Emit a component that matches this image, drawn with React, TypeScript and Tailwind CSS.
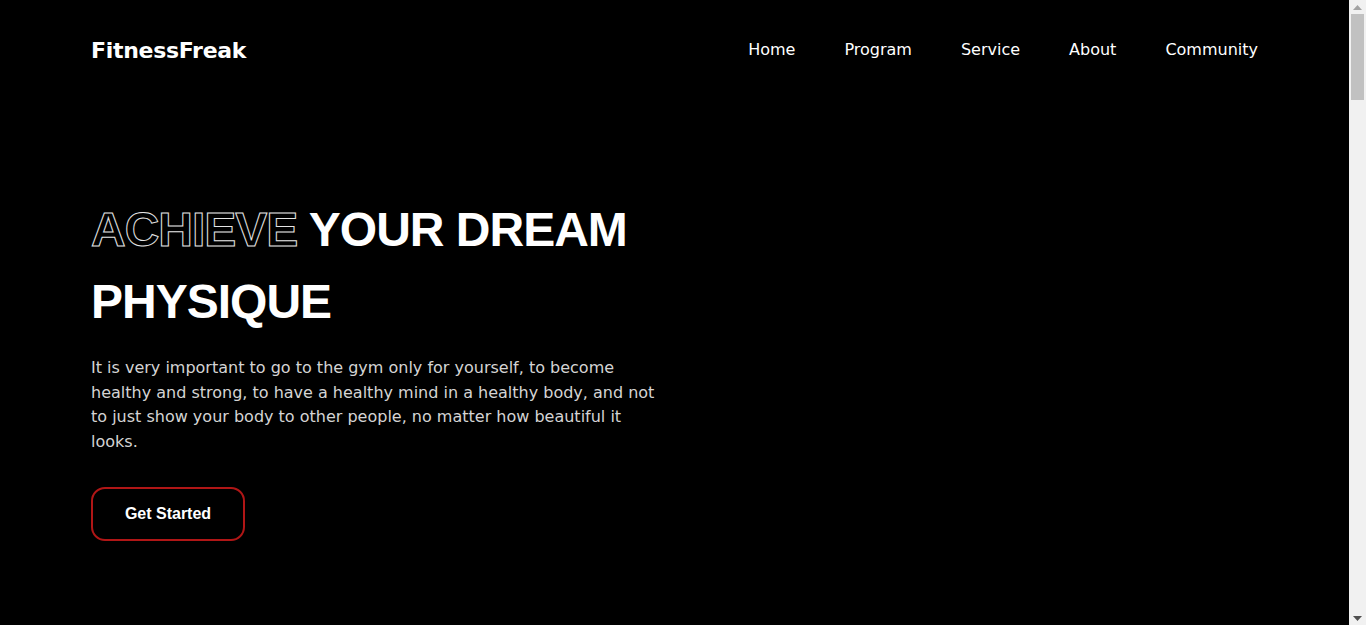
export default function App() {
  const links = ['Home', 'Program', 'Service', 'About', 'Community'];
  return (
    <div className="h-screen flex bg-black text-white font-['DejaVu_Sans',sans-serif] overflow-hidden">
      <main className="flex-1">
        {/* Header */}
        <header className="h-[100px] px-[91px] flex items-center justify-between">
          <div className="text-[22px] font-bold tracking-[-0.3px]">FitnessFreak</div>
          <nav className="flex items-center gap-[49px] text-[16px]">
            {links.map((l) => (
              <a key={l} href="#" className="text-white">
                {l}
              </a>
            ))}
          </nav>
        </header>

        {/* Hero */}
        <section className="px-[91px] pt-[94px]">
          <h1 className="font-['Liberation_Sans',Arial,sans-serif] text-[48px] leading-[72px] font-bold uppercase tracking-[-1px]">
            <span className="text-transparent [-webkit-text-stroke:1px_#e5e5e5]">Achieve</span> Your Dream
            <br />
            Physique
          </h1>
          <p className="mt-[18px] max-w-[570px] text-[16px] leading-[24.5px] text-[#d4d4d4]">
            It is very important to go to the gym only for yourself, to become healthy and strong, to have a healthy
            mind in a healthy body, and not to just show your body to other people, no matter how beautiful it looks.
          </p>
          <button className="mt-[33px] w-[154px] h-[54px] rounded-[14px] border-2 border-[#b01616] font-['Liberation_Sans',Arial,sans-serif] font-bold text-[16px] text-white">
            Get Started
          </button>
        </section>
      </main>

      {/* Scrollbar */}
      <aside className="w-[17px] bg-[#f1f1f1] flex flex-col items-center">
        <div className="h-[14px] flex items-center justify-center">
          <svg width="9" height="5" viewBox="0 0 9 5"><path d="M4.5 0L9 5H0z" fill="#a3a3a3" /></svg>
        </div>
        <div className="w-[13px] h-[86px] bg-[#c1c1c1]" />
        <div className="flex-1" />
        <div className="h-[14px] flex items-center justify-center">
          <svg width="9" height="5" viewBox="0 0 9 5"><path d="M0 0H9L4.5 5z" fill="#505050" /></svg>
        </div>
      </aside>
    </div>
  );
}
